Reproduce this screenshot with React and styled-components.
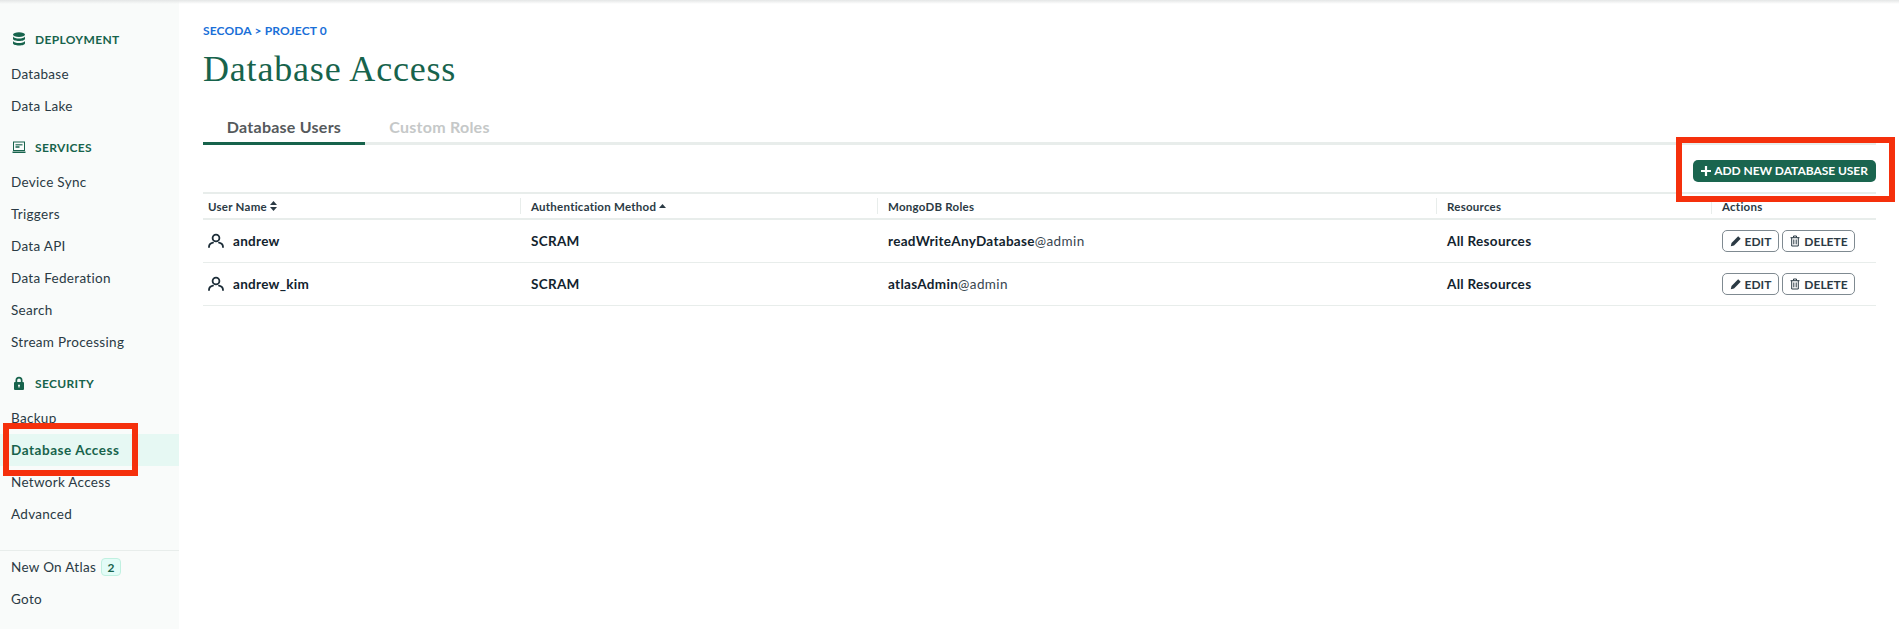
import React from 'react'
import styled, { createGlobalStyle } from 'styled-components'

const GlobalStyle = createGlobalStyle`
  html, body {
    margin: 0;
    padding: 0;
    background: #ffffff;
    font-family: "Lato", "Liberation Sans", sans-serif;
    color: #1c2d38;
  }
  * { box-sizing: border-box; }
`

const Page = styled.div`
  position: relative;
  display: flex;
  width: 1899px;
  height: 629px;
  overflow: hidden;
`

const TopShade = styled.div`
  position: absolute;
  top: 0;
  left: 0;
  right: 0;
  height: 4px;
  background: linear-gradient(#e4e6e6, rgba(255, 255, 255, 0));
`

const Sidebar = styled.aside`
  width: 179px;
  flex: none;
  padding-top: 23px;
  background: #f9fbfa;
`

const Section = styled.div`
  margin-bottom: 9px;
`

const SectionHead = styled.div`
  display: flex;
  align-items: center;
  height: 32px;
  margin-bottom: 3px;
  padding-left: 12px;
  gap: 9px;
  font-size: 12px;
  font-weight: 700;
  letter-spacing: 0.35px;
  color: #17634c;
  svg { width: 14px; height: 14px; flex: none; }
`

const NavItem = styled.div`
  display: flex;
  align-items: center;
  height: 32px;
  padding-left: 11px;
  font-size: 13.5px;
  letter-spacing: ${p => (p.$active ? 0.55 : 0.3)}px;
  font-weight: ${p => (p.$active ? 700 : 400)};
  color: ${p => (p.$active ? '#17634c' : '#2a3a44')};
  background: ${p => (p.$active ? '#e6f8f3' : 'transparent')};
`

const SideFooter = styled.div`
  margin-top: 20px;
  border-top: 1px solid #e8edeb;
`

const CountBadge = styled.span`
  display: inline-flex;
  align-items: center;
  justify-content: center;
  width: 20px;
  height: 18px;
  margin-left: 5px;
  border: 1px solid #c0f0e0;
  border-radius: 4px;
  background: #e3fcf7;
  font-size: 12px;
  font-weight: 700;
  color: #17634c;
`

const Main = styled.main`
  flex: 1;
  padding: 23px 23px 0 24px;
`

const Crumbs = styled.div`
  height: 16px;
  font-size: 12px;
  font-weight: 700;
  line-height: 16px;
  letter-spacing: 0.15px;
  color: #1a6fd8;
`

const Title = styled.h1`
  margin: 9px 0 0;
  font-family: "Liberation Serif", serif;
  font-size: 36px;
  font-weight: 400;
  line-height: 42px;
  letter-spacing: 0.82px;
  color: #17634c;
`

const Tabs = styled.div`
  display: flex;
  height: 40px;
  margin-top: 15px;
  border-bottom: 3px solid #e8edeb;
`

const Tab = styled.div`
  display: flex;
  align-items: center;
  justify-content: center;
  width: ${p => p.$width}px;
  height: 40px;
  padding-top: 5px;
  border-bottom: 3px solid ${p => (p.$active ? '#17634c' : 'transparent')};
  font-size: 16px;
  font-weight: 700;
  letter-spacing: 0.25px;
  color: ${p => (p.$active ? '#55595c' : '#c5c8c8')};
`

const Toolbar = styled.div`
  display: flex;
  justify-content: flex-end;
  height: 47px;
  padding-top: 15px;
`

const AddButton = styled.button`
  display: flex;
  align-items: center;
  justify-content: center;
  gap: 3px;
  width: 183px;
  height: 22px;
  padding: 0 0 1px;
  border: none;
  border-radius: 5px;
  background: #1a654f;
  font-family: inherit;
  font-size: 12px;
  font-weight: 700;
  letter-spacing: -0.05px;
  color: #ffffff;
  svg { width: 10px; height: 10px; }
`

const Row = styled.div`
  display: grid;
  grid-template-columns: 317px 357px 559px 275px 165px;
  align-items: center;
  height: ${p => (p.$head ? 28 : 43)}px;
  border-top: ${p => (p.$head ? '2px solid #e8edeb' : 'none')};
  border-bottom: ${p => (p.$head ? '2px solid #e8edeb' : '1px solid #e8edeb')};
`

const HeadCell = styled.div`
  display: flex;
  align-items: center;
  gap: 3px;
  height: 16px;
  padding-left: ${p => (p.$first ? 5 : 10)}px;
  border-left: ${p => (p.$first ? 'none' : '1px solid #e8edeb')};
  font-size: 11.5px;
  font-weight: 700;
  letter-spacing: 0.25px;
  color: #2b3a44;
`

const Cell = styled.div`
  display: flex;
  align-items: center;
  padding-left: ${p => (p.$first ? 5 : 11)}px;
  font-size: 13.5px;
  font-weight: 700;
  letter-spacing: 0.3px;
  color: #12232e;
`

const UserIcon = styled.svg`
  width: 16px;
  height: 16px;
  margin-right: 9px;
`

const RoleDb = styled.span`
  font-weight: 400;
  letter-spacing: 0.4px;
  color: #39464f;
`

const ActionButton = styled.button`
  display: flex;
  align-items: center;
  justify-content: center;
  gap: 3px;
  width: ${p => p.$width}px;
  height: 22px;
  margin-right: 3px;
  padding: 0;
  border: 1px solid #7f8a91;
  border-radius: 5px;
  background: #ffffff;
  font-family: inherit;
  font-size: 12px;
  font-weight: 700;
  letter-spacing: 0;
  color: #2b3a44;
  svg { width: 12px; height: 12px; }
`

// the red marks somebody drew over the screenshot
const Callout = styled.div`
  position: absolute;
  left: ${p => p.$x}px;
  top: ${p => p.$y}px;
  width: ${p => p.$w}px;
  height: ${p => p.$h}px;
  border: 6px solid #f5300c;
`

const DatabaseIcon = () => (
  <svg viewBox="0 0 14 14" fill="#17634c">
    <ellipse cx="7" cy="2.6" rx="6" ry="2.4" />
    <path d="M1 4.6c1 1.4 3.3 2 6 2s5-.6 6-2v2.2c0 1.3-2.7 2.3-6 2.3S1 8.100 1 6.800z" />
    <path d="M1 8.900c1 1.400 3.300 2 6 2s5-.6 6-2v2.300c0 1.300-2.700 2.300-6 2.300s-6-1-6-2.300z" />
  </svg>
)

const ScreenIcon = () => (
  <svg viewBox="0 0 14 14">
    <path fill="#17634c" d="M1 1.500h12V11H1zM2 2.500v7.500h10V2.500z" fillRule="evenodd" />
    <path fill="#17634c" d="M3.500 4h7v1.500h-7zM3.500 6h4v2h-4z" opacity="0.75" />
    <path fill="#17634c" d="M0.500 11.500h13V13H.5z" />
  </svg>
)

const LockIcon = () => (
  <svg viewBox="0 0 14 14">
    <path
      fill="#17634c"
      fillRule="evenodd"
      d="M3.500 6V4.200a3.500 3.500 0 0 1 7 0V6h.5a1 1 0 0 1 1 1v6a1 1 0 0 1-1 1H3a1 1 0 0 1-1-1V7a1 1 0 0 1 1-1zM5.200 6h3.600V4.200a1.800 1.800 0 0 0-3.600 0zM7 8.500a1 1 0 0 0-.6 1.800v1.200h1.200v-1.200A1 1 0 0 0 7 8.500z"
    />
  </svg>
)

const PersonIcon = () => (
  <UserIcon viewBox="0 0 16 16" fill="none" stroke="#1c2d38" strokeWidth="1.800" strokeLinecap="round">
    <circle cx="8" cy="5" r="3.400" />
    <path d="M1 14c0-2.600 1.800-4 4-4.400M15 14c0-2.600-1.800-4-4-4.400" />
  </UserIcon>
)

const PlusIcon = () => (
  <svg viewBox="0 0 10 10" fill="#ffffff">
    <path d="M3.900 0h2.200v3.900H10v2.200H6.100V10H3.900V6.100H0V3.900h3.900z" />
  </svg>
)

const PencilIcon = () => (
  <svg viewBox="0 0 12 12" fill="#2b3a44">
    <path d="M8.200 1.300l2.500 2.500-6.700 6.700-3.200.7.700-3.200z" />
  </svg>
)

const TrashIcon = () => (
  <svg viewBox="0 0 12 12" fill="none" stroke="#2b3a44" strokeWidth="1">
    <path d="M1.500 2.700h9M4.500 2.500V1h3v1.500M2.700 2.700v8.300h6.600V2.700M4.800 4.500v4.800M7.200 4.500v4.800" />
  </svg>
)

const SortBoth = () => (
  <svg width="7" height="10" viewBox="0 0 7 10" fill="#2b3a44">
    <path d="M3.500 0L7 4H0zM3.500 10L0 6h7z" />
  </svg>
)

const SortUp = () => (
  <svg width="7" height="4" viewBox="0 0 7 4" fill="#2b3a44">
    <path d="M3.500 0L7 4H0z" />
  </svg>
)

const sections = [
  { title: 'DEPLOYMENT', icon: <DatabaseIcon />, items: ['Database', 'Data Lake'] },
  {
    title: 'SERVICES',
    icon: <ScreenIcon />,
    items: ['Device Sync', 'Triggers', 'Data API', 'Data Federation', 'Search', 'Stream Processing'],
  },
  {
    title: 'SECURITY',
    icon: <LockIcon />,
    items: ['Backup', 'Database Access', 'Network Access', 'Advanced'],
  },
]

const users = [
  { name: 'andrew', role: 'readWriteAnyDatabase' },
  { name: 'andrew_kim', role: 'atlasAdmin' },
]

export default function App() {
  return (
    <>
      <GlobalStyle />
      <Page>
        <Sidebar>
          {sections.map(section => (
            <Section key={section.title}>
              <SectionHead>
                {section.icon}
                {section.title}
              </SectionHead>
              {section.items.map(item => (
                <NavItem key={item} $active={item === 'Database Access'}>
                  {item}
                </NavItem>
              ))}
            </Section>
          ))}
          <SideFooter>
            <NavItem>
              New On Atlas
              <CountBadge>2</CountBadge>
            </NavItem>
            <NavItem>Goto</NavItem>
          </SideFooter>
        </Sidebar>
        <Main>
          <Crumbs>SECODA &gt; PROJECT 0</Crumbs>
          <Title>Database Access</Title>
          <Tabs>
            <Tab $active $width={162}>Database Users</Tab>
            <Tab $width={149}>Custom Roles</Tab>
          </Tabs>
          <Toolbar>
            <AddButton>
              <PlusIcon />
              ADD NEW DATABASE USER
            </AddButton>
          </Toolbar>
          <Row $head>
            <HeadCell $first>User Name <SortBoth /></HeadCell>
            <HeadCell>Authentication Method <SortUp /></HeadCell>
            <HeadCell>MongoDB Roles</HeadCell>
            <HeadCell>Resources</HeadCell>
            <HeadCell>Actions</HeadCell>
          </Row>
          {users.map(user => (
            <Row key={user.name}>
              <Cell $first>
                <PersonIcon />
                {user.name}
              </Cell>
              <Cell>SCRAM</Cell>
              <Cell>
                {user.role}
                <RoleDb>@admin</RoleDb>
              </Cell>
              <Cell>All Resources</Cell>
              <Cell>
                <ActionButton $width={57}>
                  <PencilIcon />
                  EDIT
                </ActionButton>
                <ActionButton $width={73}>
                  <TrashIcon />
                  DELETE
                </ActionButton>
              </Cell>
            </Row>
          ))}
        </Main>
        <TopShade />
        <Callout $x={3} $y={423} $w={135} $h={53} />
        <Callout $x={1676} $y={137} $w={219} $h={65} />
      </Page>
    </>
  )
}
